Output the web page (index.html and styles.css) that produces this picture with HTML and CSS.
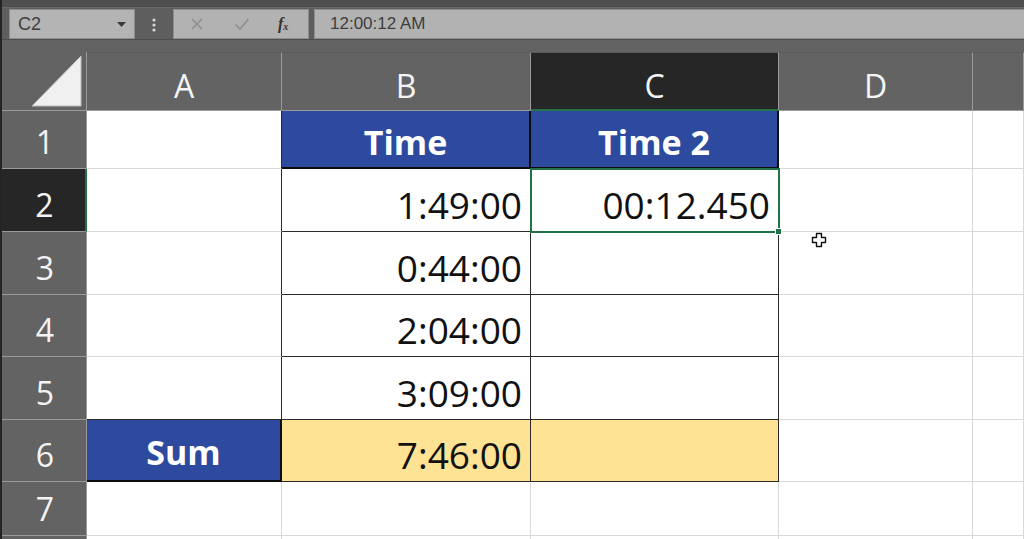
FILE: index.html
```html
<!DOCTYPE html>
<html>
<head>
<meta charset="utf-8">
<link rel="stylesheet" href="styles.css">
</head>
<body>
<div class="app">
  <div class="toolbar">
    <div class="namebox">
      <span class="ref">C2</span>
      <svg class="dd" width="9" height="5" viewBox="0 0 9 5"><path d="M0 0H9L4.5 5Z" fill="#3a3a3a"/></svg>
    </div>
    <svg class="grip" width="4" height="14" viewBox="0 0 4 14"><circle cx="2" cy="2" r="1.6" fill="#d8d8d8"/><circle cx="2" cy="7" r="1.6" fill="#d8d8d8"/><circle cx="2" cy="12" r="1.6" fill="#d8d8d8"/></svg>
    <div class="fxbtns">
      <svg class="ico" width="14" height="14" viewBox="0 0 14 14"><path d="M2 2L12 12M12 2L2 12" stroke="#8e8e8e" stroke-width="1.6"/></svg>
      <svg class="ico" width="16" height="14" viewBox="0 0 16 14"><path d="M1.5 7.5L6 12L14.5 2" stroke="#8e8e8e" stroke-width="1.6" fill="none"/></svg>
      <span class="fx">f<sub>x</sub></span>
    </div>
    <div class="formula">12:00:12 AM</div>
  </div>

  <div class="sheet">
    <div class="corner"><svg width="52" height="54" viewBox="0 0 52 54"><path d="M1 52L50 2V52Z" fill="#f0f0f0" stroke="#bdbdbd" stroke-width="1"/></svg></div>
    <div class="ch">A</div>
    <div class="ch">B</div>
    <div class="ch sel">C</div>
    <div class="ch">D</div>
    <div class="ch last"></div>

    <div class="rh">1</div>
    <div class="c dr"></div>
    <div class="c head">Time</div>
    <div class="c head">Time 2</div>
    <div class="c"></div>
    <div class="c"></div>

    <div class="rh sel">2</div>
    <div class="c dr"></div>
    <div class="c num tb">1:49:00</div>
    <div class="c num tb active">00:12.450<span class="handle"></span></div>
    <div class="c"></div>
    <div class="c"></div>

    <div class="rh">3</div>
    <div class="c dr"></div>
    <div class="c num tb">0:44:00</div>
    <div class="c tb"></div>
    <div class="c cursorcell"><svg class="cursor" width="16" height="16" viewBox="0 0 16 16"><path d="M5.5 1.5H10.5V5.5H14.5V10.5H10.5V14.5H5.5V10.5H1.5V5.5H5.5Z" fill="#fff" stroke="#111" stroke-width="1.4" stroke-linejoin="round"/></svg></div>
    <div class="c"></div>

    <div class="rh">4</div>
    <div class="c dr"></div>
    <div class="c num tb">2:04:00</div>
    <div class="c tb"></div>
    <div class="c"></div>
    <div class="c"></div>

    <div class="rh">5</div>
    <div class="c dr db"></div>
    <div class="c num tb">3:09:00</div>
    <div class="c tb"></div>
    <div class="c"></div>
    <div class="c"></div>

    <div class="rh">6</div>
    <div class="c head sum">Sum</div>
    <div class="c num tb gold">7:46:00</div>
    <div class="c tb gold"></div>
    <div class="c"></div>
    <div class="c"></div>

    <div class="rh">7</div>
    <div class="c"></div>
    <div class="c"></div>
    <div class="c"></div>
    <div class="c"></div>
    <div class="c"></div>

    <div class="rh stub"></div>
    <div class="c stub"></div>
    <div class="c stub"></div>
    <div class="c stub"></div>
    <div class="c stub"></div>
    <div class="c stub"></div>
  </div>
</div>
</body>
</html>
```

FILE: styles.css
```css
* { box-sizing: border-box; margin: 0; padding: 0; }
html, body { width: 1024px; height: 539px; overflow: hidden; }
body { background: #636363; font-family: "Open Sans", "DejaVu Sans", sans-serif; }

.app {
  border-left: 2px solid #242424;
  height: 539px;
  display: flex;
  flex-direction: column;
}

.toolbar {
  height: 52px;
  flex: none;
  display: flex;
  align-items: flex-start;
  padding: 9px 0 0 7px;
  background: linear-gradient(#4f4f4f 0 7px, #6a6a6a 7px 8px, #5e5e5e 8px 39px, #4e4e4e 39px 40px, #636363 40px);
}

.namebox {
  width: 126px;
  height: 30px;
  background: #b4b4b4;
  border: 1px solid #8d8d8d;
  display: flex;
  align-items: center;
  justify-content: space-between;
  padding: 0 8px 0 8px;
}
.ref { font-size: 18px; color: #3e3e3e; font-family: "Liberation Sans", Arial, sans-serif; }
.dd { margin-top: 1px; }

.grip { margin: 9px 17px 0 17px; }

.fxbtns {
  width: 136px;
  height: 30px;
  background: #b2b2b2;
  border: 1px solid #8d8d8d;
  display: flex;
  align-items: center;
  padding: 0 0 0 16px;
  gap: 30px;
}
.fx {
  font-family: "Liberation Serif", serif;
  font-style: italic;
  font-weight: bold;
  font-size: 16px;
  color: #333;
  margin-left: -2px;
}
.fx sub { font-size: 10px; vertical-align: -1px; }

.formula {
  flex: 1;
  margin-left: 5px;
  height: 30px;
  background: #b2b2b2;
  border-top: 1px solid #8d8d8d;
  border-bottom: 1px solid #8d8d8d;
  border-left: 1px solid #8d8d8d;
  padding-left: 15px;
  display: flex;
  align-items: center;
  font-family: "Liberation Sans", Arial, sans-serif;
  font-size: 17px;
  color: #3e3e3e;
}

.sheet {
  flex: 1;
  min-height: 0;
  display: grid;
  grid-template-columns: 85px 195px 249px 248px 194px 1fr;
  grid-template-rows: 59px 58px 63px 63px 62px 63px 62px 54px 1fr;
  background: #fff;
  overflow: hidden;
}

.corner {
  background: #636363;
  border-right: 1px solid #9a9a9a;
  border-bottom: 1px solid #9a9a9a;
  display: flex;
  align-items: flex-end;
  justify-content: flex-end;
  padding: 0 3px 2px 0;
}

.ch {
  background: #636363;
  color: #f4f4f4;
  border-right: 1px solid #9a9a9a;
  border-bottom: 1px solid #9a9a9a;
  border-top: 1px solid #5a5a5a;
  font-size: 32px;
  display: flex;
  align-items: flex-end;
  justify-content: center;
  padding-bottom: 2px;
  line-height: 44px;
}
.ch.sel { background: #262626; border-bottom: 2px solid #217346; padding-bottom: 1px; }

.rh {
  background: #636363;
  color: #f4f4f4;
  border-right: 1px solid #9a9a9a;
  border-bottom: 1px solid #9a9a9a;
  font-size: 32px;
  display: flex;
  align-items: flex-end;
  justify-content: center;
  padding-bottom: 4px;
  line-height: 44px;
  padding-left: 2px;
}
.rh.sel { background: #262626; border-right: 2px solid #217346; }

.c {
  border-right: 1px solid #d9d9d9;
  border-bottom: 1px solid #d9d9d9;
  display: flex;
  align-items: flex-end;
  position: relative;
  color: #111;
  font-size: 37px;
  line-height: 50px;
}
.stub { border-bottom: none; }
.c.dr { border-right-color: #2a2a2a; }
.c.db { border-bottom-color: #2a2a2a; }

.c.head {
  background: #2e4a9f;
  color: #fff;
  font-weight: bold;
  font-size: 34px;
  justify-content: center;
  border-right: 2px solid #0c0c0c;
  border-bottom: 2px solid #0c0c0c;
  line-height: 46px;
  padding-bottom: 2px;
}
.c.sum { padding-bottom: 5px; }

.c.num { justify-content: flex-end; padding-right: 8px; padding-bottom: 1px; }
.c.tb { border-right-color: #2a2a2a; border-bottom-color: #2a2a2a; }
.c.gold { background: #ffe394; border-right-color: #2a2a2a; border-bottom-color: #2a2a2a; }

.c.active {
  outline: 2px solid #217346;
  outline-offset: -1px;
  z-index: 2;
}
.handle {
  position: absolute;
  right: -4px;
  bottom: -4px;
  width: 7px;
  height: 7px;
  background: #217346;
  border: 1px solid #fff;
}

.cursorcell { overflow: visible; z-index: 3; }
.cursor { position: absolute; left: 32px; top: 0px; }
```
